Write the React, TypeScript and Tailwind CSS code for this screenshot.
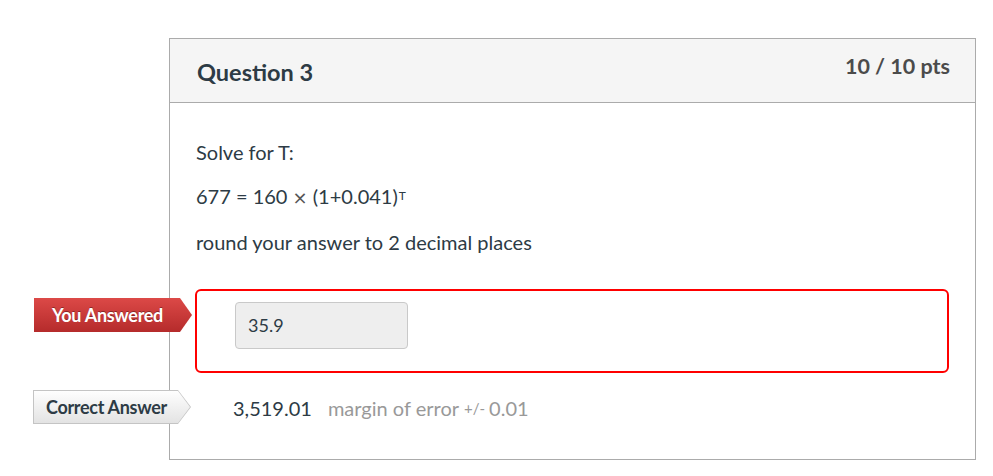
import React from "react";

export default function App() {
  return (
    <div className="min-h-[476px] w-[993px] bg-white pt-[38px] pl-[169px]" style={{ fontFamily: "Lato, 'Open Sans', sans-serif" }}>
      <div className="w-[807px] h-[422px] border border-[#ababab] bg-white">
        <div className="h-[64px] bg-[#f5f5f5] border-b border-[#ababab] flex items-start justify-between pl-[27px] pr-[25px]">
          <h2 className="mt-[17px] text-[23.5px] leading-[32px] font-bold text-[#2d3b45]">Question 3</h2>
          <div className="mt-[13px] text-[21.5px] leading-[28px] font-bold text-[#4b4b4b]">10 / 10 pts</div>
        </div>
        <div className="pt-[37px] pl-[25px] pr-[26px]">
          <div className="pl-[1px] text-[20px] leading-[24px] text-[#2d3b45]">
            <p className="mb-[20px] h-[24px]">Solve for T:</p>
            <p className="mb-[22px] h-[24px]">
              677 = 160 <span className="text-[#555] leading-none" style={{ fontFamily: "'DejaVu Sans', sans-serif", fontSize: "18px" }}>×</span> (1+0.041)<sup className="text-[12px] leading-none relative top-[-4px] ml-[1px]">T</sup>
            </p>
            <p className="h-[24px]">round your answer to 2 decimal places</p>
          </div>
          <div className="relative mt-[35px] h-[84px] rounded-[6px] border-2 border-[#ff0000] pt-[11px] pl-[38px]">
            <div
              className="absolute left-[-163px] top-[7px] w-[158px] h-[34px] flex items-center pl-[18px] text-[18px] font-bold text-white"
              style={{
                clipPath: "polygon(0 0, calc(100% - 12px) 0, 100% 50%, calc(100% - 12px) 100%, 0 100%)",
                background: "linear-gradient(#dc4947, #b52b2b)",
                textShadow: "0 -1px 0 rgba(0,0,0,0.35)",
                letterSpacing: "-0.3px",
              }}
            >
              You Answered
            </div>
            <div className="w-[173px] h-[47px] rounded-[4px] border border-[#c9c9c9] bg-[#eeeeee] flex items-center pl-[12px] text-[18px] text-[#2d3b45]">
              35.9
            </div>
          </div>
          <div className="relative mt-[17px] h-[36px] flex items-center pl-[38px]">
            <div
              className="absolute left-[-162px] top-[0px] w-[158px] h-[34px] bg-[#c4c4c4]"
              style={{ clipPath: "polygon(0 0, calc(100% - 13px) 0, 100% 50%, calc(100% - 13px) 100%, 0 100%)" }}
            >
              <div
                className="absolute inset-[1px] flex items-center pl-[12px] text-[18px] font-bold text-[#2d3b45]"
                style={{
                  clipPath: "polygon(0 0, calc(100% - 12px) 0, 100% 50%, calc(100% - 12px) 100%, 0 100%)",
                  background: "linear-gradient(#fefefe, #e3e3e3)",
                  letterSpacing: "-0.3px",
                }}
              >
                Correct Answer
              </div>
            </div>
            <span className="text-[20px] text-[#2d3b45]">3,519.01</span>
            <span className="ml-[16px] text-[20px] text-[#999999]">margin of error</span>
            <span className="ml-[5px] text-[15px] text-[#999999]">+/-</span>
            <span className="ml-[4px] text-[20px] text-[#999999]">0.01</span>
          </div>
        </div>
      </div>
    </div>
  );
}
